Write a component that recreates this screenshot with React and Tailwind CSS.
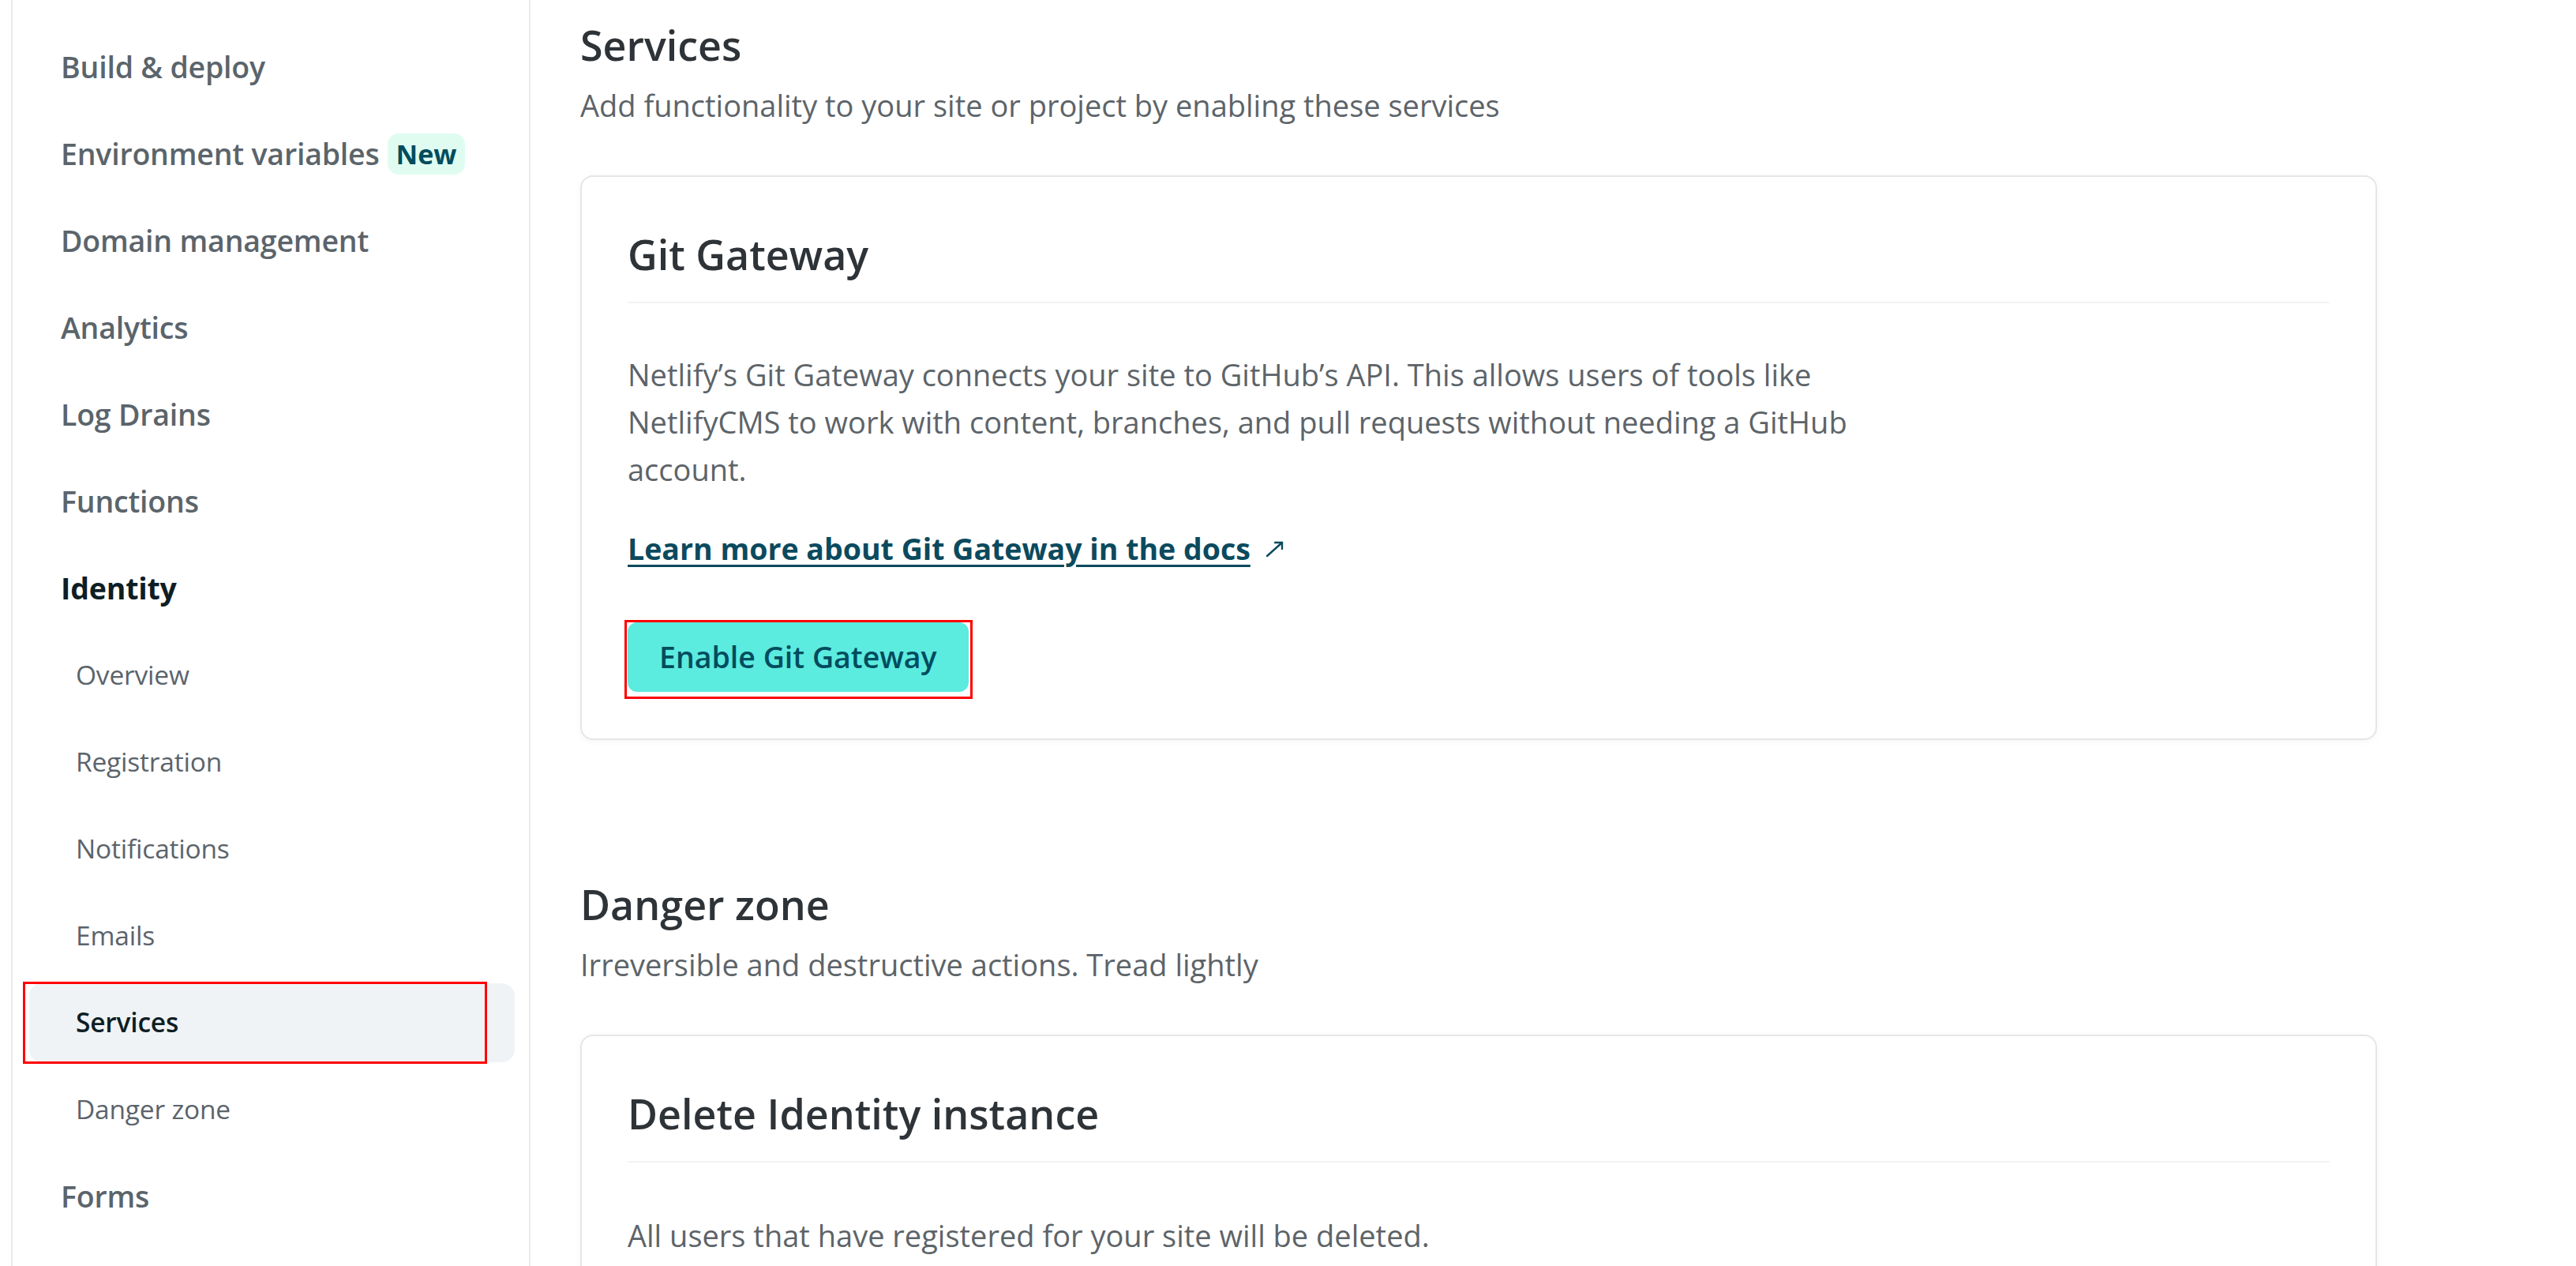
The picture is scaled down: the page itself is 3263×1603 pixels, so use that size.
import React from "react";

const font = { fontFamily: '"Open Sans", "Noto Sans", Arial, sans-serif' };

const navItems = [
  { label: "Build & deploy", level: 0 },
  { label: "Environment variables", level: 0, badge: "New" },
  { label: "Domain management", level: 0 },
  { label: "Analytics", level: 0 },
  { label: "Log Drains", level: 0 },
  { label: "Functions", level: 0 },
  { label: "Identity", level: 0, active: true },
  { label: "Overview", level: 1 },
  { label: "Registration", level: 1 },
  { label: "Notifications", level: 1 },
  { label: "Emails", level: 1 },
  { label: "Services", level: 1, active: true, selected: true },
  { label: "Danger zone", level: 1 },
  { label: "Forms", level: 0 },
];

function NavItem({ item }) {
  const base = "relative flex items-center h-[100px] rounded-[16px]";
  const indent = item.level === 0 ? "pl-[40px]" : "pl-[59px]";
  const bg = item.selected ? "bg-[#f0f3f6]" : "";
  let text;
  if (item.level === 0) {
    text = item.active
      ? "text-[37.5px] font-bold text-[#0e1e25]"
      : "text-[37.5px] font-semibold text-[#5b646b]";
  } else {
    text = item.active
      ? "text-[33.5px] font-semibold text-[#0e1e25]"
      : "text-[33.5px] font-normal text-[#5b646b]";
  }

  return (
    <div className={`${base} ${indent} ${bg}`}>
      <span className={`${text} leading-none tracking-[-0.2px]`}>{item.label}</span>
      {item.badge && (
        <span className="ml-[10px] flex items-center h-[52px] px-[11px] rounded-[14px] bg-[#e0fcf1] text-[#014c5e] text-[34px] font-bold leading-none">
          {item.badge}
        </span>
      )}
      {item.selected && (
        <div className="absolute -left-[8px] right-[35px] -top-[2px] -bottom-[2px] border-[3px] border-[#ff0000]" />
      )}
    </div>
  );
}

function Card({ title, children }) {
  return (
    <div className="w-[2276px] rounded-[16px] border-2 border-[#e4e7ea] bg-white shadow-[0_2px_10px_rgba(0,0,0,0.04)] px-[58px] pt-[66px] pb-[59px]">
      <h3 className="text-[52px] leading-[64px] font-semibold text-[#2e3338] pb-[28px] border-b-2 border-[#f2f3f4]">
        {title}
      </h3>
      {children}
    </div>
  );
}

export default function App() {
  return (
    <div style={font} className="w-[3263px] h-[1603px] overflow-hidden bg-white flex">
      {/* sidebar */}
      <aside className="ml-[14px] w-[658px] h-full border-l-2 border-r-2 border-[#e8eaec] pl-[21px] pr-[18px] pt-[35px]">
        <nav className="flex flex-col gap-[10px]">
          {navItems.map((item) => (
            <NavItem key={item.label} item={item} />
          ))}
        </nav>
      </aside>

      {/* main content */}
      <main className="pl-[63px] pt-[25px] flex flex-col">
        <h2 className="text-[52px] leading-[64px] font-semibold text-[#2e3338]">Services</h2>
        <p className="mt-[20px] text-[38px] leading-[48px] text-[#5d6469]">
          Add functionality to your site or project by enabling these services
        </p>

        <div className="mt-[65px]">
          <Card title="Git Gateway">
            <p className="mt-[60px] max-w-[1600px] text-[38px] leading-[60px] text-[#5d6469]">
              Netlify’s Git Gateway connects your site to GitHub’s API. This allows users of tools like NetlifyCMS to work with content, branches, and pull requests without needing a GitHub account.
            </p>
            <div className="mt-[47px] flex items-center h-[48px]">
              <a href="#" className="text-[37.5px] leading-[48px] font-bold text-[#0b4a5e] underline decoration-[3px] underline-offset-[6px]">
                Learn more about Git Gateway in the docs
              </a>
              <svg className="ml-[19px] w-[24px] h-[22px] text-[#0b4a5e]" viewBox="0 0 24 22" fill="none" stroke="currentColor" strokeWidth="2.4" strokeLinecap="round">
                <path d="M2 20 L21 3" />
                <path d="M12 3 H21 V11" />
              </svg>
            </div>
            <div className="mt-[69px] relative inline-block">
              <button className="h-[88px] px-[40px] rounded-[12px] bg-[#5cebdf] text-[#014c5e] text-[37.5px] font-semibold leading-none">
                Enable Git Gateway
              </button>
              <div className="absolute -left-[4px] -right-[5px] -top-[3px] -bottom-[9px] border-[3px] border-[#ff0000]" />
            </div>
          </Card>
        </div>

        <h2 className="mt-[176px] text-[52px] leading-[64px] font-semibold text-[#2e3338]">Danger zone</h2>
        <p className="mt-[20px] text-[38px] leading-[48px] text-[#5d6469]">
          Irreversible and destructive actions. Tread lightly
        </p>

        <div className="mt-[65px]">
          <Card title="Delete Identity instance">
            <p className="mt-[62px] text-[38px] leading-[60px] text-[#5d6469]">
              All users that have registered for your site will be deleted.
            </p>
          </Card>
        </div>
      </main>
    </div>
  );
}
